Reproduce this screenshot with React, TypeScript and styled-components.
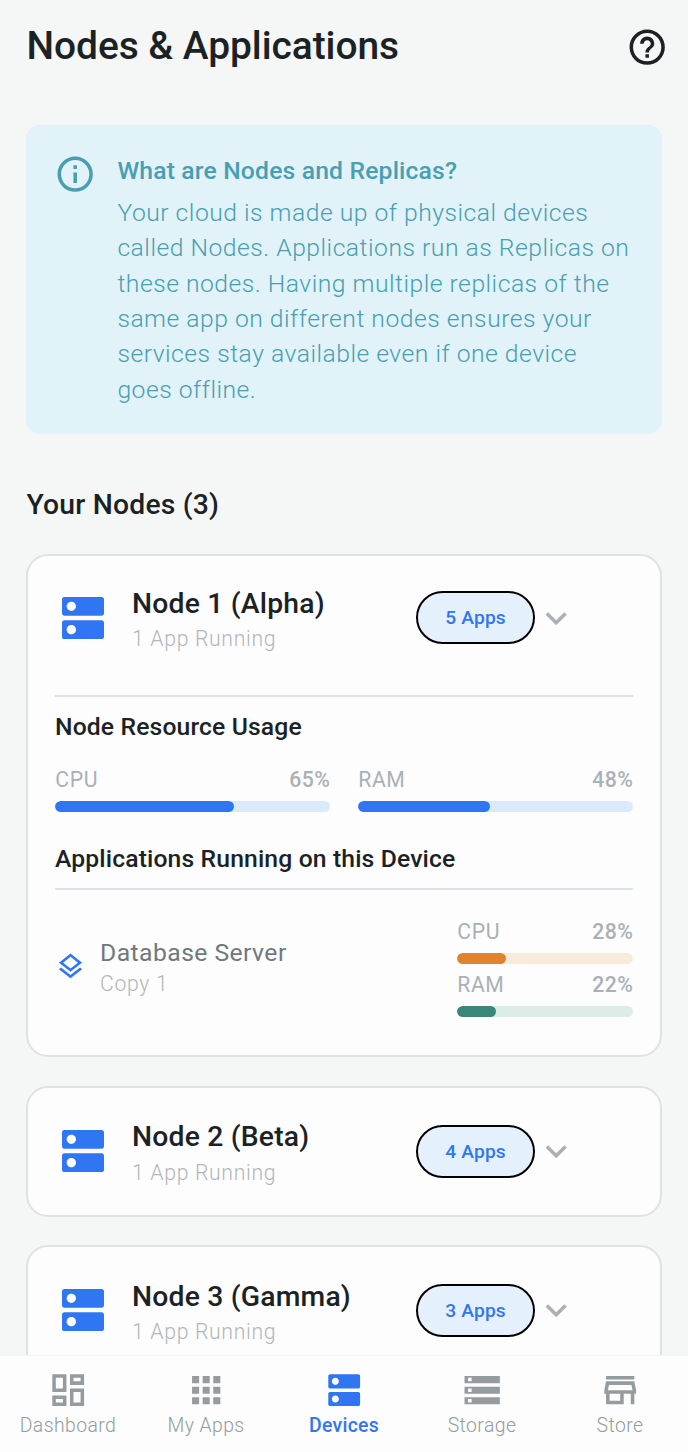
import React from 'react';
import styled, { createGlobalStyle } from 'styled-components';
import {
  MdHelpOutline,
  MdInfoOutline,
  MdDns,
  MdExpandMore,
  MdOutlineLayers,
  MdOutlineDashboard,
  MdApps,
  MdStorage,
  MdOutlineStore,
} from 'react-icons/md';

const Global = createGlobalStyle`
  * { box-sizing: border-box; }
  body { margin: 0; background: #f4f7f6; font-family: Roboto, "Liberation Sans", sans-serif; color: #1b2226; }
  svg { display: block; flex: none; }
`;

const Screen = styled.div`
  height: 1452px;
  display: flex;
  flex-direction: column;
  overflow: hidden;
`;

const Scroll = styled.main`
  flex: 1;
  min-height: 0;
  overflow: hidden;
  padding: 0 26px;
`;

const Header = styled.header`
  height: 92px;
  margin: 0 -6.7px 0 0.5px;
  display: flex;
  align-items: center;
  justify-content: space-between;

  svg {
    margin-top: 1.4px;
  }
`;

const Title = styled.h1`
  margin: 0;
  font-size: 38.9px;
  font-weight: 500;
  line-height: 50px;
  letter-spacing: -0.05px;
`;

const InfoCard = styled.section`
  display: flex;
  gap: 20.6px;
  margin-top: 33px;
  height: 309px;
  padding: 28px 28px 28px 28.4px;
  border-radius: 14px;
  background: #e1f2f9;
  color: #489fb2;
`;

const InfoTitle = styled.h2`
  margin: 0 0 6.6px;
  font-size: 24.7px;
  font-weight: 500;
  line-height: 35.3px;
  letter-spacing: 0.17px;
`;

const InfoBody = styled.p`
  margin: 0;
  font-size: 24.7px;
  font-weight: 300;
  line-height: 35.35px;
  letter-spacing: 0.5px;
  white-space: nowrap;
`;

const SectionTitle = styled.h2`
  margin: 49.5px 0 28px 0.5px;
  font-size: 28.3px;
  font-weight: 500;
  line-height: 42.4px;
  letter-spacing: 0.2px;
`;

const Card = styled.article<{ $height: number }>`
  height: ${(p) => p.$height}px;
  margin-bottom: 28.4px;
  padding: 26px 27px;
  border: 2px solid #dde3e4;
  border-radius: 22px;
  background: #fdfdfd;
`;

const CardHead = styled.div<{ $open: boolean }>`
  display: flex;
  align-items: center;
  height: ${(p) => (p.$open ? 72 : 74.6)}px;
  color: #3076f2;
`;

const CardText = styled.div`
  flex: 1;
  margin: 1.6px 0 0 21px;
`;

const NodeName = styled.h3`
  margin: 0;
  color: #1b2226;
  font-size: 28.3px;
  font-weight: 500;
  line-height: 42.4px;
  letter-spacing: 0.2px;
`;

const Caption = styled.div`
  color: #b0b6ba;
  font-size: 21.2px;
  font-weight: 300;
  line-height: 28.9px;
  letter-spacing: 0.68px;
`;

const Badge = styled.span`
  width: 119px;
  height: 53px;
  display: flex;
  align-items: center;
  justify-content: center;
  border: 2px solid #000;
  border-radius: 27px;
  background: #e4f0fb;
  font-size: 19.2px;
  font-weight: 500;
  letter-spacing: 0.15px;
`;

const Chevron = styled.span`
  margin-right: 55.5px;
  color: #a9b1b6;
`;

const Divider = styled.hr<{ $top: number }>`
  height: 2px;
  margin: ${(p) => p.$top}px 0 0;
  border: 0;
  background: #dde3e4;
`;

const SubTitle = styled.h4<{ $top: number }>`
  margin: ${(p) => p.$top}px 0 0;
  font-size: 24.7px;
  font-weight: 500;
  line-height: 35.3px;
  letter-spacing: 0.14px;
`;

const Metrics = styled.div`
  display: flex;
  gap: 28px;
  margin-top: 21px;
`;

const MetricBox = styled.div`
  flex: 1;
`;

const MetricHead = styled.div`
  display: flex;
  justify-content: space-between;
  margin: 0 -0.2px 6.5px 0.2px;
  color: #a9b1b6;
  font-size: 21.2px;
  line-height: 28.3px;
  letter-spacing: 0.65px;
`;

const MetricValue = styled.span`
  font-weight: 500;
  letter-spacing: 0.45px;
`;

const Track = styled.div<{ $color: string }>`
  height: 11px;
  border-radius: 6px;
  background: ${(p) => p.$color};
  overflow: hidden;
`;

const Fill = styled.div<{ $color: string }>`
  height: 100%;
  border-radius: 6px;
  background: ${(p) => p.$color};
`;

const AppRow = styled.div`
  display: flex;
  align-items: center;
  margin-top: 28px;
  color: #3076f2;

  > svg {
    margin-top: -1.4px;
  }
`;

const AppText = styled.div`
  flex: 1;
  margin: -0.2px 0 0 14px;
`;

const AppName = styled.div`
  color: #6f787c;
  font-size: 24.7px;
  line-height: 35.3px;
  letter-spacing: 0.45px;
`;

const AppMetrics = styled.div`
  width: 176px;
  display: flex;
  flex-direction: column;
  gap: 7.5px;
`;

const Nav = styled.nav`
  height: 97px;
  display: flex;
  justify-content: center;
  background: #fdfdfd;
  border-top: 1px solid #f4f6f6;
`;

const NavItem = styled.div<{ $active?: boolean }>`
  flex: none;
  width: 138px;
  padding-top: 13px;
  display: flex;
  flex-direction: column;
  align-items: center;
  color: ${(p) => (p.$active ? '#3076f2' : '#949c9f')};
  font-size: 19.4px;
  font-weight: ${(p) => (p.$active ? 500 : 300)};
  line-height: 29px;
  letter-spacing: ${(p) => (p.$active ? 0.3 : 0.42)}px;
`;

const palette = {
  blue: ['#3076f2', '#dae9fb'],
  orange: ['#e08330', '#f9ebda'],
  green: ['#3b8678', '#dcece8'],
};

function Metric({ label, value, tone }: { label: string; value: number; tone: keyof typeof palette }) {
  const [fill, track] = palette[tone];
  return (
    <MetricBox>
      <MetricHead>
        <span>{label}</span>
        <MetricValue>{value}%</MetricValue>
      </MetricHead>
      <Track $color={track}>
        <Fill $color={fill} style={{ width: `${value}%` }} />
      </Track>
    </MetricBox>
  );
}

function NodeCard({ name, apps, height, children }: { name: string; apps: number; height: number; children?: React.ReactNode }) {
  return (
    <Card $height={height}>
      <CardHead $open={Boolean(children)}>
        <MdDns size={56} />
        <CardText>
          <NodeName>{name}</NodeName>
          <Caption>1 App Running</Caption>
        </CardText>
        <Badge>{apps} Apps</Badge>
        <Chevron>
          <MdExpandMore size={42.4} />
        </Chevron>
      </CardHead>
      {children}
    </Card>
  );
}

const tabs = [
  { label: 'Dashboard', Icon: MdOutlineDashboard },
  { label: 'My Apps', Icon: MdApps },
  { label: 'Devices', Icon: MdDns, active: true },
  { label: 'Storage', Icon: MdStorage },
  { label: 'Store', Icon: MdOutlineStore },
];

export default function App() {
  return (
    <>
      <Global />
      <Screen>
        <Scroll>
          <Header>
            <Title>Nodes &amp; Applications</Title>
            <MdHelpOutline size={42.4} />
          </Header>
          <InfoCard>
            <MdInfoOutline size={42.4} />
            <div>
              <InfoTitle>What are Nodes and Replicas?</InfoTitle>
              <InfoBody>
                Your cloud is made up of physical devices
                <br />
                called Nodes. Applications run as Replicas on
                <br />
                these nodes. Having multiple replicas of the
                <br />
                same app on different nodes ensures your
                <br />
                services stay available even if one device
                <br />
                goes offline.
              </InfoBody>
            </div>
          </InfoCard>
          <SectionTitle>Your Nodes (3)</SectionTitle>
          <NodeCard name="Node 1 (Alpha)" apps={5} height={503.5}>
            <Divider $top={41} />
            <SubTitle $top={12.5}>Node Resource Usage</SubTitle>
            <Metrics>
              <Metric label="CPU" value={65} tone="blue" />
              <Metric label="RAM" value={48} tone="blue" />
            </Metrics>
            <SubTitle $top={29}>Applications Running on this Device</SubTitle>
            <Divider $top={12} />
            <AppRow>
              <MdOutlineLayers size={31} />
              <AppText>
                <AppName>Database Server</AppName>
                <Caption>Copy 1</Caption>
              </AppText>
              <AppMetrics>
                <Metric label="CPU" value={28} tone="orange" />
                <Metric label="RAM" value={22} tone="green" />
              </AppMetrics>
            </AppRow>
          </NodeCard>
          <NodeCard name="Node 2 (Beta)" apps={4} height={131} />
          <NodeCard name="Node 3 (Gamma)" apps={3} height={131} />
        </Scroll>
        <Nav>
          {tabs.map(({ label, Icon, active }) => (
            <NavItem key={label} $active={active}>
              <Icon size={42.4} />
              {label}
            </NavItem>
          ))}
        </Nav>
      </Screen>
    </>
  );
}
